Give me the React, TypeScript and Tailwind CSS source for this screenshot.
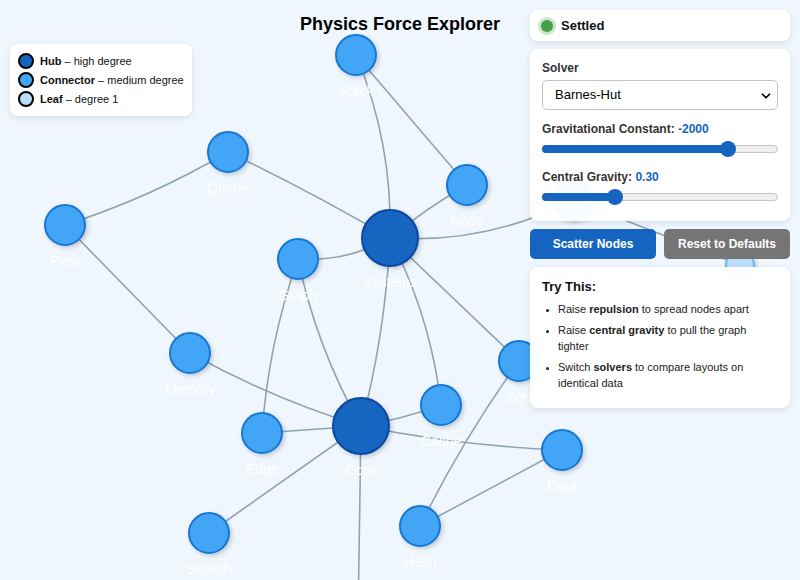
import React from "react";
import { ChevronDown } from "lucide-react";

type GNode = { id: string; x: number; y: number; r: number; kind: "hub" | "conn" | "leaf"; label?: string };

const nodes: GNode[] = [
  { id: "stack", x: 356, y: 55, r: 20, kind: "conn", label: "Stack" },
  { id: "queue", x: 228, y: 152, r: 20, kind: "conn", label: "Queue" },
  { id: "flow", x: 65, y: 225, r: 20, kind: "conn", label: "Flow" },
  { id: "node", x: 467, y: 185, r: 20, kind: "conn", label: "Node" },
  { id: "systems", x: 390, y: 238, r: 28, kind: "hub", label: "Systems" },
  { id: "graph", x: 298, y: 259, r: 20, kind: "conn", label: "Graph" },
  { id: "memory", x: 190, y: 353, r: 20, kind: "conn", label: "Memory" },
  { id: "sort", x: 519, y: 361, r: 20, kind: "conn", label: "Sort" },
  { id: "cache", x: 441, y: 405, r: 20, kind: "conn", label: "Cache" },
  { id: "edge", x: 262, y: 433, r: 20, kind: "conn", label: "Edge" },
  { id: "core", x: 361, y: 426, r: 28, kind: "hub", label: "Core" },
  { id: "data", x: 562, y: 450, r: 20, kind: "conn", label: "Data" },
  { id: "hash", x: 420, y: 526, r: 20, kind: "conn", label: "Hash" },
  { id: "search", x: 209, y: 533, r: 20, kind: "conn", label: "Search" },
  { id: "tree", x: 573, y: 200, r: 20, kind: "conn", label: "Tree" },
  { id: "leaf", x: 740, y: 265, r: 14, kind: "leaf", label: "Leaf" },
  { id: "api", x: 358, y: 620, r: 20, kind: "conn" },
];

// [from, to, bend]
const edges: [string, string, number][] = [
  ["stack", "systems", -20],
  ["stack", "node", 0],
  ["queue", "systems", -4],
  ["queue", "flow", -10],
  ["flow", "memory", 0],
  ["node", "systems", 4],
  ["systems", "graph", -14],
  ["systems", "tree", 26],
  ["tree", "leaf", 0],
  ["systems", "sort", 0],
  ["systems", "cache", -16],
  ["systems", "core", -10],
  ["graph", "edge", 12],
  ["graph", "core", 14],
  ["memory", "core", 10],
  ["edge", "core", 0],
  ["core", "cache", 4],
  ["core", "data", 8],
  ["core", "search", 0],
  ["core", "api", 0],
  ["sort", "hash", 8],
  ["hash", "data", 0],
];

const fill = { hub: "#1565c0", conn: "#42a5f5", leaf: "#bbdefb" };
const stroke = { hub: "#0d47a1", conn: "#1976d2", leaf: "#64b5f6" };

function edgePath(a: GNode, b: GNode, bend: number) {
  const mx = (a.x + b.x) / 2;
  const my = (a.y + b.y) / 2;
  const dx = b.x - a.x;
  const dy = b.y - a.y;
  const len = Math.hypot(dx, dy) || 1;
  const cx = mx + (-dy / len) * bend;
  const cy = my + (dx / len) * bend;
  return `M${a.x} ${a.y} Q${cx} ${cy} ${b.x} ${b.y}`;
}

const GraphCanvas = () => {
  const byId = Object.fromEntries(nodes.map((n) => [n.id, n]));
  return (
    <svg className="absolute inset-0" width={800} height={580}>
      <defs>
        <filter id="nodeShadow" x="-50%" y="-50%" width="200%" height="200%">
          <feDropShadow dx="2" dy="2" stdDeviation="2" floodColor="#000" floodOpacity="0.18" />
        </filter>
      </defs>
      {edges.map(([f, t, bend]) => (
        <path
          key={f + t}
          d={edgePath(byId[f], byId[t], bend)}
          fill="none"
          stroke="#90a4ae"
          strokeWidth={1.6}
        />
      ))}
      {nodes.map((n) => (
        <g key={n.id}>
          <circle
            cx={n.x}
            cy={n.y}
            r={n.r}
            fill={fill[n.kind]}
            stroke={stroke[n.kind]}
            strokeWidth={2}
            filter="url(#nodeShadow)"
          />
          {n.label && (
            <text
              x={n.x}
              y={n.y + n.r + 21}
              textAnchor="middle"
              fill="#ffffff"
              fontSize={14}
              fontFamily="'Liberation Sans', Arial, sans-serif"
            >
              {n.label}
            </text>
          )}
        </g>
      ))}
    </svg>
  );
};

const Slider = ({ pct }: { pct: number }) => (
  <div className="relative mt-[3px] h-[16px]">
    <div className="absolute left-0 right-0 top-[4px] h-[8px] rounded-full border border-[#c4c4c4] bg-[#efefef]" />
    <div
      className="absolute left-0 top-[4px] h-[8px] rounded-full bg-[#1565c0]"
      style={{ width: `${pct}%` }}
    />
    <div
      className="absolute top-0 h-[16px] w-[16px] -translate-x-1/2 rounded-full bg-[#1565c0]"
      style={{ left: `${pct}%` }}
    />
  </div>
);

const LegendRow = ({ color, name, desc }: { color: string; name: string; desc: string }) => (
  <div className="flex items-center gap-[6px] whitespace-nowrap">
    <span className="h-[16px] w-[16px] shrink-0 rounded-full border-2 border-black" style={{ background: color }} />
    <span>
      <b>{name}</b> – {desc}
    </span>
  </div>
);

export default function App() {
  return (
    <div className="relative h-[580px] w-[800px] overflow-hidden bg-[#eff6fe] font-['Liberation_Sans',Arial,sans-serif] text-[#111]">
      <GraphCanvas />

      <h1 className="absolute left-0 right-0 top-[11px] text-center text-[18px] font-bold text-black">
        Physics Force Explorer
      </h1>

      <div className="absolute left-[10px] top-[44px] flex flex-col gap-[3px] rounded-lg bg-white/[0.97] px-[8px] py-[9px] text-[11px] leading-[16px] shadow-[0_2px_6px_rgba(0,0,0,0.1)]">
        <LegendRow color="#1565c0" name="Hub" desc="high degree" />
        <LegendRow color="#42a5f5" name="Connector" desc="medium degree" />
        <LegendRow color="#bbdefb" name="Leaf" desc="degree 1" />
      </div>

      <div className="absolute left-[530px] top-[10px] flex w-[260px] flex-col gap-[8px]">
        <div className="flex h-[31px] items-center gap-[8px] rounded-lg bg-white/[0.97] px-[11px] text-[13px] font-bold shadow-[0_2px_6px_rgba(0,0,0,0.1)]">
          <span className="h-[12px] w-[12px] rounded-full bg-[#43a047] ring-[3px] ring-[#c8e6c9]" />
          Settled
        </div>

        <div className="rounded-lg bg-white/[0.97] px-[12px] pb-[16px] pt-[10px] text-[12px] shadow-[0_2px_6px_rgba(0,0,0,0.1)]">
          <div className="font-bold text-[#333]">Solver</div>
          <div className="relative mt-[3px] flex h-[30px] items-center rounded-[5px] border border-[#c4c4c4] bg-white pl-[12px] text-[13px] text-black">
            Barnes-Hut
            <ChevronDown className="absolute right-[4px] top-[8px]" size={14} strokeWidth={3} />
          </div>
          <div className="mt-[10px] font-bold text-[#333]">
            Gravitational Constant: <span className="text-[#1565c0]">-2000</span>
          </div>
          <Slider pct={79} />
          <div className="mt-[11px] font-bold text-[#333]">
            Central Gravity: <span className="text-[#1565c0]">0.30</span>
          </div>
          <Slider pct={31} />
        </div>

        <div className="flex gap-[8px] text-[12px] font-bold text-white">
          <button className="h-[30px] flex-1 rounded-[5px] bg-[#1565c0]">Scatter Nodes</button>
          <button className="h-[30px] flex-1 rounded-[5px] bg-[#757575]">Reset to Defaults</button>
        </div>

        <div className="rounded-lg bg-white/[0.97] px-[12px] pb-[17px] pt-[10px] shadow-[0_2px_6px_rgba(0,0,0,0.1)]">
          <div className="text-[13px] font-bold">Try This:</div>
          <ul className="mt-[4px] list-disc pl-[16px] text-[11px] leading-[16px] text-[#222] marker:text-[9px]">
            <li>
              Raise <b>repulsion</b> to spread nodes apart
            </li>
            <li className="mt-[5px]">
              Raise <b>central gravity</b> to pull the graph tighter
            </li>
            <li className="mt-[5px]">
              Switch <b>solvers</b> to compare layouts on identical data
            </li>
          </ul>
        </div>
      </div>
    </div>
  );
}
